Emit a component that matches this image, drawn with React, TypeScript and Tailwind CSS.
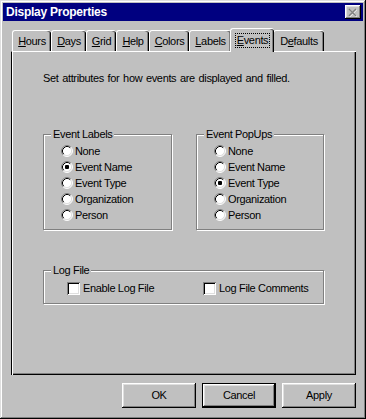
import React from 'react'

const font = { fontFamily: '"Liberation Sans", Arial, sans-serif' }

function Radio({ checked }: { checked?: boolean }) {
  return (
    <svg width="12" height="12" viewBox="0 0 12 12" className="shrink-0">
      <circle cx="6" cy="6" r="5" fill="#fff" />
      <path d="M2.11 9.89 A5.5 5.5 0 0 1 9.89 2.11" fill="none" stroke="#808080" strokeWidth="1" />
      <path d="M9.89 2.11 A5.5 5.5 0 0 1 2.11 9.89" fill="none" stroke="#fff" strokeWidth="1" />
      <path d="M2.82 9.18 A4.5 4.5 0 0 1 9.18 2.82" fill="none" stroke="#000" strokeWidth="1" />
      <path d="M9.18 2.82 A4.5 4.5 0 0 1 2.82 9.18" fill="none" stroke="#dfdfdf" strokeWidth="1" />
      {checked && <rect x="4" y="4" width="4" height="4" rx="1" fill="#000" />}
    </svg>
  )
}

function Check() {
  return (
    <span className="block w-[13px] h-[13px] shrink-0 bg-white shadow-[inset_1px_1px_#808080,inset_-1px_-1px_#fff,inset_2px_2px_#000,inset_-2px_-2px_#dfdfdf]" />
  )
}

function Group({ title, className, children }: { title: string; className: string; children: React.ReactNode }) {
  return (
    <div className={`relative border border-[#808080] shadow-[inset_1px_1px_#fff,1px_1px_#fff] ${className}`}>
      <span className="absolute -top-[8px] left-[7px] bg-[#c0c0c0] px-[2px] leading-[14px]">{title}</span>
      {children}
    </div>
  )
}

function RadioList({ selected }: { selected: string }) {
  const items = ['None', 'Event Name', 'Event Type', 'Organization', 'Person']
  return (
    <div className="flex flex-col pt-[8px] pl-[17px]">
      {items.map(item => (
        <div key={item} className="flex items-center h-[16px] gap-[2px]">
          <Radio checked={item === selected} />
          <span className="leading-[14px]">{item}</span>
        </div>
      ))}
    </div>
  )
}

const tabs = [
  { label: 'Hours', key: 0, w: 'w-[39px]' },
  { label: 'Days', key: 0, w: 'w-[35px]' },
  { label: 'Grid', key: 0, w: 'w-[30px]' },
  { label: 'Help', key: 0, w: 'w-[33px]' },
  { label: 'Colors', key: 0, w: 'w-[40px]' },
  { label: 'Labels', key: 0, w: 'w-[42px]' },
  { label: 'Events', key: 0, w: 'w-[44px]' },
  { label: 'Defaults', key: 1, w: 'w-[51px]' },
]

const raised = 'shadow-[inset_-1px_-1px_#000,inset_1px_1px_#fff,inset_-2px_-2px_#808080,inset_2px_2px_#dfdfdf]'

function Button({ label, isDefault }: { label: string; isDefault?: boolean }) {
  return (
    <button
      className={`w-[74px] h-[25px] bg-[#c0c0c0] text-black text-[11px] tracking-[-0.35px] ${raised} ${isDefault ? 'border border-black' : ''}`}
      style={font}
    >
      {label}
    </button>
  )
}

export default function App() {
  return (
    <div
      className="w-[366px] h-[419px] bg-[#c0c0c0] p-[3px] text-[11px] tracking-[-0.35px] text-black flex flex-col shadow-[inset_-1px_-1px_#000,inset_1px_1px_#dfdfdf,inset_-2px_-2px_#808080,inset_2px_2px_#fff]"
      style={font}
    >
      {/* Title bar */}
      <div className="h-[18px] bg-[#000080] flex items-center justify-between pl-[3px] pr-[2px]">
        <span className="text-white font-bold text-[12px] tracking-[-0.25px] leading-none">Display Properties</span>
        <div className={`w-[16px] h-[14px] bg-[#c0c0c0] flex items-center justify-center ${raised}`}>
          <svg width="10" height="9" viewBox="0 0 10 9">
            <path d="M1.5 1.5 L8.5 8.5 M8.5 1.5 L1.5 8.5" stroke="#fff" strokeWidth="1.6" />
            <path d="M1 1 L8 8 M8 1 L1 8" stroke="#808080" strokeWidth="1.6" />
          </svg>
        </div>
      </div>

      {/* Tabs */}
      <div className="flex items-end ml-[9px] mt-[7px] h-[23px]">
        {tabs.map(t => {
          const active = t.label === 'Events'
          return (
            <div
              key={t.label}
              className={`${t.w} flex items-center justify-center bg-[#c0c0c0] rounded-t-[3px] border-t border-l border-white shadow-[inset_-1px_0_#000,inset_-2px_0_#808080] ${active ? 'h-[24px] -mb-[1px] relative z-10 -mx-[1px]' : 'h-[21px]'}`}
            >
              <span className={`leading-[13px] px-[1px] ${active ? 'outline outline-1 outline-dotted outline-black' : ''}`}>
                {t.key === 1 ? (
                  <>D<u>e</u>faults</>
                ) : (
                  <>
                    <u>{t.label[0]}</u>
                    {t.label.slice(1)}
                  </>
                )}
              </span>
            </div>
          )
        })}
      </div>

      {/* Panel */}
      <div className="ml-[8px] mr-[7px] h-[324px] border-t border-t-white border-l border-l-black shadow-[inset_1px_0_#fff,inset_-1px_-1px_#000,inset_-2px_-2px_#808080] flex flex-col pl-[31px] pt-[19px]">
        <p className="leading-[14px] [word-spacing:1px]">Set attributes for how events are displayed and filled.</p>

        <div className="flex mt-[49px] gap-[24px]">
          <Group title="Event Labels" className="w-[129px] h-[96px]">
            <RadioList selected="Event Name" />
          </Group>
          <Group title="Event PopUps" className="w-[128px] h-[96px]">
            <RadioList selected="Event Type" />
          </Group>
        </div>

        <Group title="Log File" className="w-[281px] h-[34px] mt-[40px]">
          <div className="flex items-center h-full pl-[23px] pt-[2px]">
            <div className="flex items-center gap-[3px] w-[136px]">
              <Check />
              <span className="leading-[14px]">Enable Log File</span>
            </div>
            <div className="flex items-center gap-[3px]">
              <Check />
              <span className="leading-[14px]">Log File Comments</span>
            </div>
          </div>
        </Group>
      </div>

      {/* Buttons */}
      <div className="flex justify-end gap-[6px] mt-[8px] mr-[7px]">
        <Button label="OK" />
        <Button label="Cancel" isDefault />
        <Button label="Apply" />
      </div>
    </div>
  )
}
